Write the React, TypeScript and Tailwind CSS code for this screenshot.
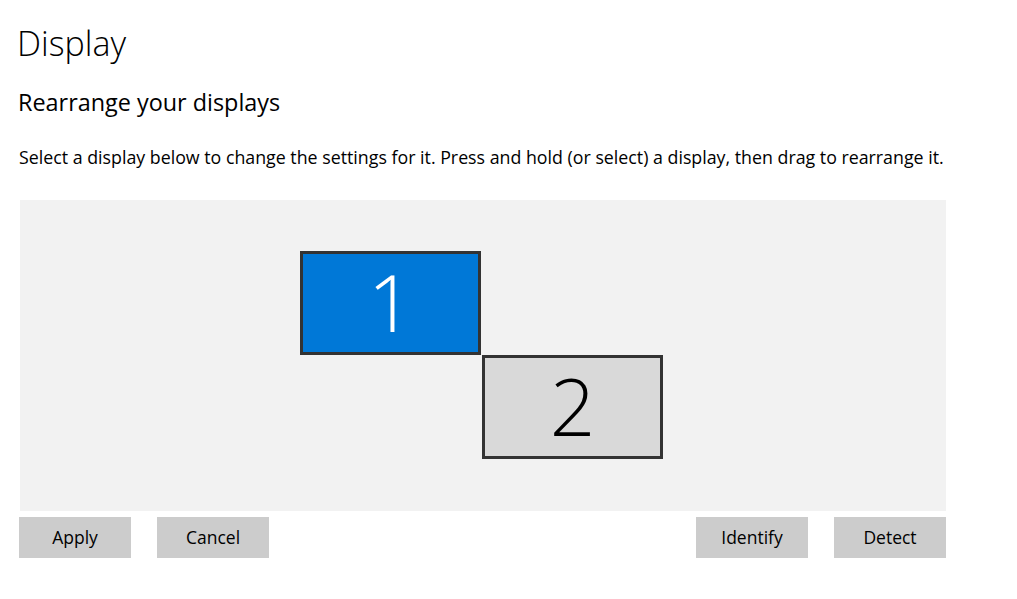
const font = "font-['Open_Sans','Noto_Sans',sans-serif]";

function Monitor({
  label,
  className,
}: {
  label: string;
  className: string;
}) {
  return (
    <div
      className={`absolute flex items-center justify-center w-[181px] h-[104px] border-[3px] border-[#333333] text-[80px] font-light leading-none ${className}`}
    >
      <span className="-mt-[4px]">{label}</span>
    </div>
  );
}

function Button({ children }: { children: string }) {
  return (
    <button className="w-[112px] h-[41px] bg-[#cccccc] text-[17.5px] text-black leading-none">
      {children}
    </button>
  );
}

export default function App() {
  return (
    <div className={`min-h-screen bg-white text-black ${font}`}>
      <div className="w-[946px] pl-[19px]">
        <h1 className="pt-[20px] -ml-[2px] text-[34px] font-light leading-[46px]">
          Display
        </h1>
        <h2 className="mt-[20px] -ml-[1px] text-[23.4px] leading-[32px]">
          Rearrange your displays
        </h2>
        <p className="mt-[27px] text-[17.8px] leading-[24px] whitespace-nowrap">
          Select a display below to change the settings for it. Press and hold
          (or select) a display, then drag to rearrange it.
        </p>

        {/* Arrangement canvas */}
        <div className="relative mt-[31px] ml-[1px] h-[311px] bg-[#f2f2f2]">
          <Monitor label="1" className="left-[280px] top-[51px] bg-[#0078d7] text-white" />
          <Monitor label="2" className="left-[462px] top-[155px] bg-[#d9d9d9] text-black" />
        </div>

        <div className="mt-[6px] flex items-center">
          <div className="flex gap-[26px]">
            <Button>Apply</Button>
            <Button>Cancel</Button>
          </div>
          <div className="ml-auto flex gap-[26px]">
            <Button>Identify</Button>
            <Button>Detect</Button>
          </div>
        </div>
      </div>
    </div>
  );
}
